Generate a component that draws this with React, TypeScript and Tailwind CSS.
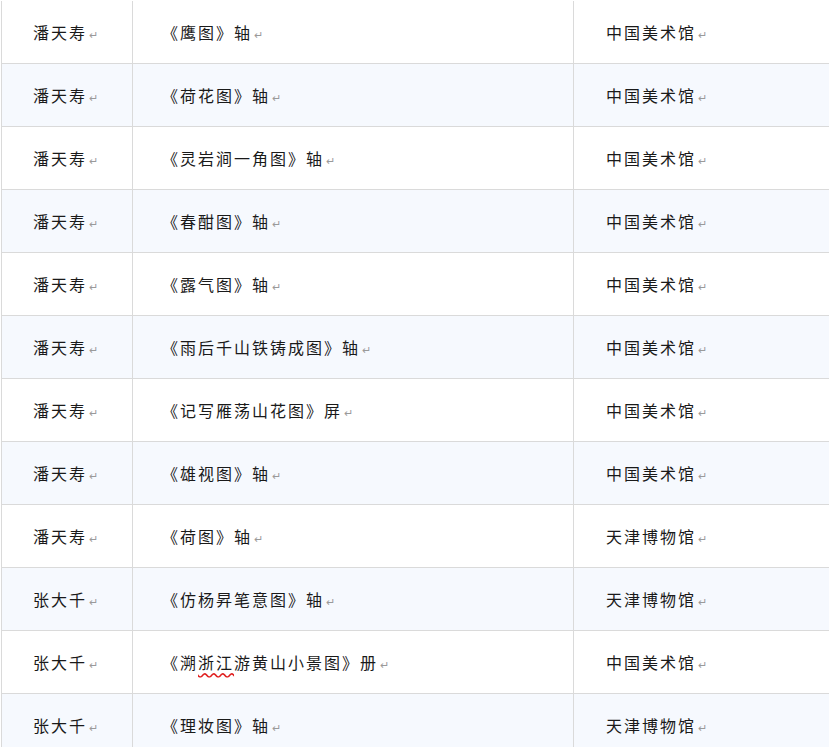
const rows: [string, string, string][] = [
  ['潘天寿', '《鹰图》轴', '中国美术馆'],
  ['潘天寿', '《荷花图》轴', '中国美术馆'],
  ['潘天寿', '《灵岩涧一角图》轴', '中国美术馆'],
  ['潘天寿', '《春酣图》轴', '中国美术馆'],
  ['潘天寿', '《露气图》轴', '中国美术馆'],
  ['潘天寿', '《雨后千山铁铸成图》轴', '中国美术馆'],
  ['潘天寿', '《记写雁荡山花图》屏', '中国美术馆'],
  ['潘天寿', '《雄视图》轴', '中国美术馆'],
  ['潘天寿', '《荷图》轴', '天津博物馆'],
  ['张大千', '《仿杨昇笔意图》轴', '天津博物馆'],
  ['张大千', '《溯浙江游黄山小景图》册', '中国美术馆'],
  ['张大千', '《理妆图》轴', '天津博物馆'],
]

function Mark() {
  return <span className="ml-[2px] text-[11px] text-[#9a9a9a] relative top-[2px]">↵</span>
}

function Cell({ text, className }: { text: React.ReactNode; className: string }) {
  return (
    <div className={`flex items-center ${className}`}>
      <span className="text-[16px] text-[#1a1a1a] tracking-[2px]">{text}</span>
      <Mark />
    </div>
  )
}

export default function App() {
  return (
    <div className="w-[829px] h-[747px] overflow-hidden bg-white" style={{ fontFamily: '"Noto Sans CJK SC", "Noto Sans", sans-serif' }}>
      <div className="ml-[1px] mt-[1px] border-l border-[#dadada]">
        {rows.map(([a, b, c], i) => (
          <div key={i} className={`flex h-[63px] border-b border-[#dadada] ${i % 2 ? 'bg-[#f6f9fe]' : 'bg-white'}`}>
            <Cell text={a} className="w-[131px] shrink-0 border-r border-[#dadada] pl-[31px]" />
            <Cell
              text={i === 10 ? (
                <>《溯<span className="underline decoration-wavy decoration-[#e02020] underline-offset-[3px]">浙江</span>游黄山小景图》册</>
              ) : b}
              className="w-[441px] shrink-0 border-r border-[#dadada] pl-[29px]"
            />
            <Cell text={c} className="flex-1 pl-[32px]" />
          </div>
        ))}
      </div>
    </div>
  )
}
